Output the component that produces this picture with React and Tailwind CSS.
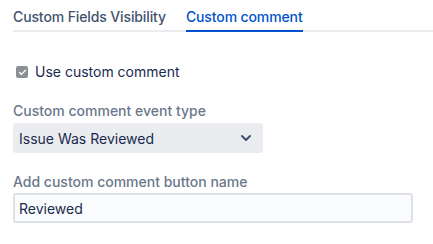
import { Check, ChevronDown } from 'lucide-react';

const tabs = ['Custom Fields Visibility', 'Custom comment'];

const App = () => {
    const active = 1;

    return (
        <div className="w-[433px] h-[244px] bg-white pl-[13px] pt-[7px] font-['Inter',sans-serif] text-[14px] text-[#172b4d]">
            {/* Tabs */}
            <div className="flex gap-[20px] border-b-2 border-[#ebecf0]">
                {tabs.map((t, i) => (
                    <div
                        key={t}
                        className={`-mb-[2px] pb-[3px] leading-5 font-medium tracking-[-0.12px] border-b-2 ${i === active ? 'text-[#0052cc] border-[#0052cc]' : 'text-[#42526e] border-transparent'}`}
                    >
                        {t}
                    </div>
                ))}
            </div>

            {/* Checkbox */}
            <label className="mt-[30px] flex items-center h-5 leading-5">
                <span className="ml-[3px] mr-[7px] flex h-[12px] w-[12px] items-center justify-center rounded-[2px] bg-[#8c8f96]">
                    <Check className="w-[9px] h-[9px] text-white" strokeWidth={3.5} />
                </span>
                <span>Use custom comment</span>
            </label>

            {/* Event type select */}
            <div className="mt-[19px] leading-5 font-medium text-[#6b778c]">Custom comment event type</div>
            <div className="mt-[2px] flex h-[30px] w-[250px] items-center justify-between rounded-[3px] bg-[#ebecf0] pl-[6px] pr-[9px]">
                <span className="text-[#172b4d]">Issue Was Reviewed</span>
                <ChevronDown className="w-[16px] h-[16px] text-[#42526e]" strokeWidth={3} />
            </div>

            {/* Button name input */}
            <div className="mt-[19px] leading-5 font-medium text-[#6b778c]">Add custom comment button name</div>
            <div className="mt-[1px] flex h-[30px] w-[400px] items-center rounded-[3px] border-2 border-[#dfe1e6] bg-[#fafbfc] pl-[4px]">
                <span className="text-[#172b4d]">Reviewed</span>
            </div>
        </div>
    );
};

export default App;
